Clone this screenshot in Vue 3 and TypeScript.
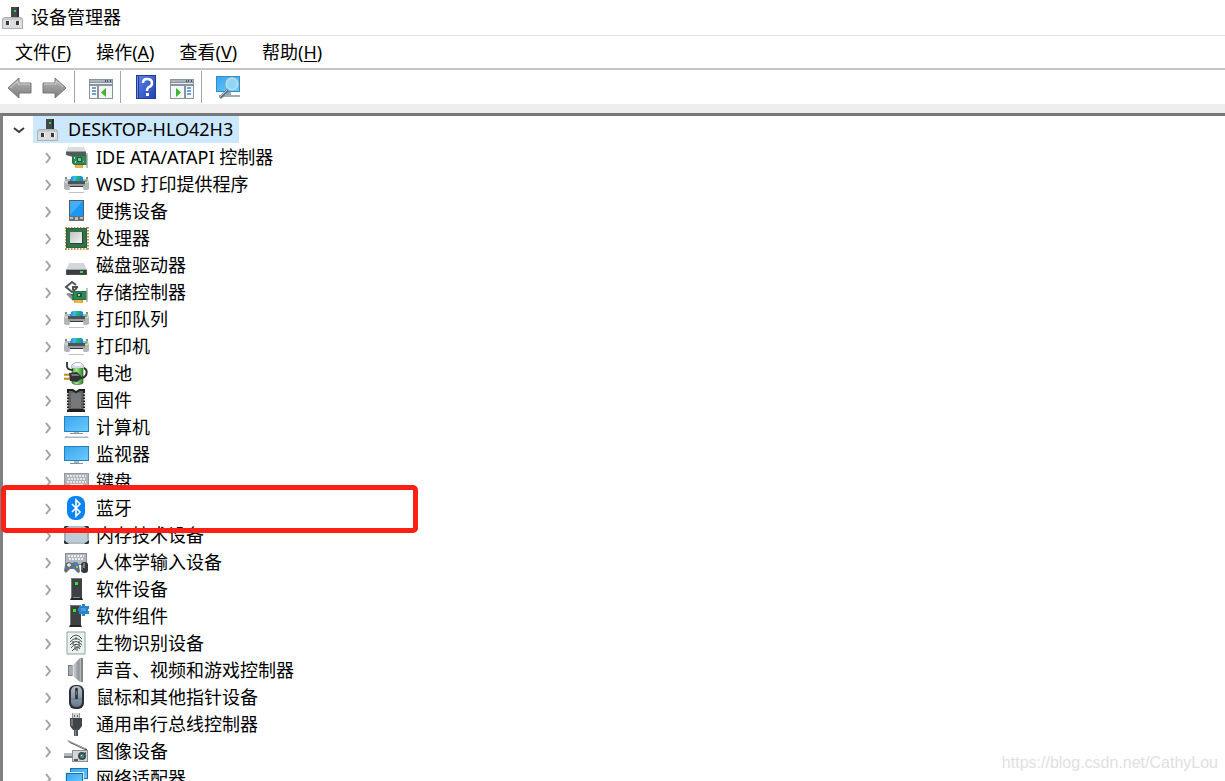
<script setup lang="ts">
import { ref } from 'vue'

interface DeviceClass {
  name: string
  icon: string
  marked?: boolean
}

const title = '设备管理器'

const menus = [
  { label: '文件', key: 'F' },
  { label: '操作', key: 'A' },
  { label: '查看', key: 'V' },
  { label: '帮助', key: 'H' },
]

const toolGroups = [
  [{ icon: 'back', label: '后退' }, { icon: 'forward', label: '前进' }],
  [{ icon: 'tree-pane', label: '显示/隐藏控制台树' }],
  [{ icon: 'help', label: '帮助' }, { icon: 'action-pane', label: '显示/隐藏操作窗格' }],
  [{ icon: 'scan', label: '扫描检测硬件改动' }],
]

const host = 'DESKTOP-HLO42H3'
const open = ref(true)

const devices: DeviceClass[] = [
  { name: 'IDE ATA/ATAPI 控制器', icon: 'ide' },
  { name: 'WSD 打印提供程序', icon: 'printer' },
  { name: '便携设备', icon: 'portable' },
  { name: '处理器', icon: 'cpu' },
  { name: '磁盘驱动器', icon: 'disk' },
  { name: '存储控制器', icon: 'storage' },
  { name: '打印队列', icon: 'printer' },
  { name: '打印机', icon: 'printer' },
  { name: '电池', icon: 'battery' },
  { name: '固件', icon: 'firmware' },
  { name: '计算机', icon: 'computer' },
  { name: '监视器', icon: 'monitor' },
  { name: '键盘', icon: 'keyboard' },
  { name: '蓝牙', icon: 'bluetooth', marked: true },
  { name: '内存技术设备', icon: 'memory' },
  { name: '人体学输入设备', icon: 'hid' },
  { name: '软件设备', icon: 'software' },
  { name: '软件组件', icon: 'component' },
  { name: '生物识别设备', icon: 'biometric' },
  { name: '声音、视频和游戏控制器', icon: 'sound' },
  { name: '鼠标和其他指针设备', icon: 'mouse' },
  { name: '通用串行总线控制器', icon: 'usb' },
  { name: '图像设备', icon: 'camera' },
  { name: '网络适配器', icon: 'network' },
]
</script>

<template>
  <div class="window">
    <svg class="defs" aria-hidden="true">
      <defs>
        <linearGradient id="g-screen" x1="0" y1="0" x2="1" y2="1">
          <stop offset="0" stop-color="#3aa5f0" /><stop offset="1" stop-color="#6ccafc" />
        </linearGradient>
        <linearGradient id="g-arrow" x1="0" y1="0" x2="0" y2="1">
          <stop offset="0" stop-color="#b8b8b8" /><stop offset="1" stop-color="#7c7c7c" />
        </linearGradient>
        <linearGradient id="g-help" x1="0" y1="0" x2="1" y2="1">
          <stop offset="0" stop-color="#5a80ea" /><stop offset="1" stop-color="#2343ae" />
        </linearGradient>
        <linearGradient id="g-metal" x1="0" y1="0" x2="1" y2="1">
          <stop offset="0" stop-color="#bfc2c4" /><stop offset="1" stop-color="#f2f3f3" />
        </linearGradient>
        <linearGradient id="g-horn" x1="0" y1="0" x2="1" y2="0">
          <stop offset="0" stop-color="#d5d7da" /><stop offset=".65" stop-color="#8d9297" /><stop offset="1" stop-color="#d9dcdf" />
        </linearGradient>
        <linearGradient id="g-print" x1="0" y1="0" x2="1" y2="0">
          <stop offset="0" stop-color="#1787e5" /><stop offset=".3" stop-color="#3fb9fa" /><stop offset=".55" stop-color="#19b877" /><stop offset="1" stop-color="#1b7ee8" />
        </linearGradient>
        <linearGradient id="g-green" x1="0" y1="0" x2="1" y2="0">
          <stop offset="0" stop-color="#4fa33b" /><stop offset=".4" stop-color="#a3e58d" /><stop offset="1" stop-color="#2c8727" />
        </linearGradient>
        <linearGradient id="g-mouse" x1="0" y1="0" x2="0" y2="1">
          <stop offset="0" stop-color="#b4bfca" /><stop offset="1" stop-color="#66788d" />
        </linearGradient>
      </defs>

      <symbol id="i-host" viewBox="0 0 24 24">
        <path d="M10 1h8v11h-8z" fill="#45484b" /><path d="M16 1h2v11h-2z" fill="#2d2f31" />
        <path d="M13 4h2v2h-2z" fill="#25df39" />
        <path d="M1 13l2-2h17l2 2v10H1z" fill="#aeb0b4" />
        <path d="M2 13h19v9H2z" fill="#dcdde0" />
        <path d="M3 12h17l1 2H2z" fill="#c6c8cb" />
        <path d="M5 15h3v4H5zM15 15h3v4h-3z" fill="#3a3a3c" />
        <path d="M8 15h1v4H8zM18 15h1v4h-1z" fill="#fff" />
      </symbol>

      <symbol id="i-ide" viewBox="0 0 24 24">
        <path d="M4 1h16l2 5H2z" fill="#dadde0" /><path d="M2 5h20v6H9L2 9z" fill="#57595b" />
        <path d="M2 5h20v1H2z" fill="#9c9ea0" />
        <path d="M8 9h15v10H10l-2-2z" fill="#1d7746" /><path d="M9 10h13v8H10z" fill="#328659" />
        <path d="M13 11h5v5h-5z" fill="#195c3b" /><path d="M14 12h3v3h-3z" fill="#8dbd9c" />
        <path d="M10 11h1v2h-1zM11 15h1v2h-1zM19 15h1v1h-1z" fill="#b6d9bf" />
        <path d="M11 19h8v3h-8z" fill="#ef9f21" /><path d="M13 19v3M15 19v3M17 19v3" stroke="#fbd17a" stroke-width=".7" />
        <path d="M23 7v15" stroke="#a4a9a7" stroke-width="1.4" />
      </symbol>

      <symbol id="i-printer" viewBox="0 0 24 24">
        <path d="M7 8V4l2-1h8l2 1v4z" fill="url(#g-print)" />
        <path d="M1 4h2v3H1zM22 4h2v3h-2z" fill="#84878a" />
        <path d="M1 6h23l1 4v6l-2 1H2l-2-1v-6z" fill="#b3b6b9" />
        <path d="M1 8h23v2H1z" fill="#cfd1d3" />
        <path d="M6 6h13v2H6z" fill="url(#g-print)" />
        <path d="M4 8h17v3H4z" fill="#505356" />
        <path d="M4 11h17v2H4z" fill="#9a9da0" />
        <path d="M6 13h13v2H6z" fill="#3b3d3f" />
        <path d="M6 14h13l1 6H5z" fill="#fff" />
        <path d="M5 19h15v1H5z" fill="#bfc1c3" /><path d="M21 7h2v2h-2z" fill="#34da3a" />
      </symbol>

      <symbol id="i-portable" viewBox="0 0 24 24">
        <path d="M5 0h15v21H5z" fill="#555a5f" /><path d="M6 1h13v15H6z" fill="#1997f6" />
        <path d="M6 1h13L6 15z" fill="#43adfa" /><path d="M5 16h15v5H5z" fill="#696f74" />
        <path d="M6 17h3v2H6zM11 17h3v3h-3zM16 17h3v2h-3z" fill="#b9bfc4" />
      </symbol>

      <symbol id="i-cpu" viewBox="0 0 24 24">
        <path d="M1 1h23M1 22h23M2 0v23M24 0v23" stroke="#bb954b" stroke-width="2" stroke-dasharray="1.5 1.5" />
        <path d="M2 1h21v20H2z" fill="#28623e" /><path d="M3 2h19v18H3z" fill="#36704b" />
        <path d="M6 5h13v12H6z" fill="#1c4a2e" /><path d="M6 5h12v11H6z" fill="url(#g-metal)" />
      </symbol>

      <symbol id="i-disk" viewBox="0 0 24 24">
        <path d="M5 9h15l3 7H2z" fill="#d4d6da" /><path d="M2 15h21v6H2z" fill="#505356" />
        <path d="M3 16h19v4H3z" fill="#3a3d3f" /><path d="M2 15h21v1H2z" fill="#a2a5a8" />
        <path d="M16 17h3v2h-3z" fill="#34dd48" />
      </symbol>

      <symbol id="i-storage" viewBox="0 0 24 24">
        <path d="M12 4 8 1 2 6l6 5 5-4M14 6H9v3" fill="none" stroke="#505356" stroke-width="2" />
        <path d="M3 12l6 6h3v-5H8z" fill="#5a5d60" /><path d="M2 13l3-1 6 6-2 2z" fill="#909396" />
        <path d="M9 10h14v9H8z" fill="#1d7746" /><path d="M10 11h12v7H10z" fill="#328659" />
        <path d="M13 12h5v4h-5z" fill="#17573a" /><path d="M14 13h2v2h-2z" fill="#9acbaa" />
        <path d="M10 19h9v3h-9z" fill="#eea027" /><path d="M12 19v3M14 19v3M16 19v3" stroke="#fbd17a" stroke-width=".7" />
        <path d="M23 7v14" stroke="#a4a9a7" stroke-width="1.4" />
      </symbol>

      <symbol id="i-battery" viewBox="0 0 24 24">
        <path d="M8 3c1-3 10-3 11 0v18c-2 2-9 2-11 0z" fill="url(#g-green)" stroke="#406637" stroke-width=".7" />
        <path d="M8 3c1-3 10-3 11 0v3H8z" fill="#d8d9ed" /><ellipse cx="13.5" cy="2.500" rx="4" ry="1.500" fill="#fafafd" />
        <path d="M3 0v4q0 4 6 4" fill="none" stroke="#2e3131" stroke-width="1.800" />
        <path d="M16 16c8 0 8-8 4-10" fill="none" stroke="#2e3131" stroke-width="2" />
        <path d="M0 13h6M0 17h7" stroke="#d2a937" stroke-width="2" /><path d="M0 12h6M0 16h7" stroke="#76601e" stroke-width=".5" />
        <path d="M5 11l8-1 4 4v3l-4 3-7-1z" fill="#303335" /><path d="M7 12h6l3 2H8z" fill="#777a7c" />
      </symbol>

      <symbol id="i-firmware" viewBox="0 0 24 24">
        <path d="M3 0h6l3 2 3-2h6v23H3z" fill="#1e1e1e" />
        <path d="M5 2h3l4 2 4-2h3v18H5z" fill="#5f6061" /><path d="M7 4h3l2 1 2-1h3v15H7z" fill="#777879" />
        <path d="M3 4v17M21 4v17" stroke="#e4e4e4" stroke-width="3" stroke-dasharray="1.500 1.500" />
      </symbol>

      <symbol id="i-computer" viewBox="0 0 24 24">
        <path d="M0 0h25v16H0z" fill="#2582b9" /><path d="M1 1h23v14H1z" fill="url(#g-screen)" />
        <path d="M10 16h5v2h-5z" fill="#a7b7c3" /><path d="M6 17h13v1H6z" fill="#7f929e" />
        <path d="M2 20h21l2 2H0z" fill="#a7b5c0" /><path d="M3 20h19v1H3z" fill="#d5dde2" />
      </symbol>

      <symbol id="i-monitor" viewBox="0 0 24 24">
        <path d="M0 3h25v15H0z" fill="#2582b9" /><path d="M1 4h23v13H1z" fill="url(#g-screen)" />
        <path d="M10 18h5v2h-5z" fill="#a7b7c3" /><path d="M6 20h13v1H6z" fill="#7f929e" />
      </symbol>

      <symbol id="i-keyboard" viewBox="0 0 24 24">
        <path d="M0 3h25v15H0z" fill="#9298a0" /><path d="M1 4h23v13H1z" fill="#b2b6bb" />
        <path d="M3 6h19M4 9h18M3 12h19" stroke="#f4f5f5" stroke-width="1.500" stroke-dasharray="2 1" />
        <path d="M6 15h13" stroke="#f4f5f5" stroke-width="2" />
      </symbol>

      <symbol id="i-bluetooth" viewBox="0 0 24 24">
        <rect x="3" y="-1" width="18" height="24" rx="8" fill="#0a84f4" />
        <path d="M8 7l8 8-4 4V3l4 4-8 8" fill="none" stroke="#fff" stroke-width="1.600" />
      </symbol>

      <symbol id="i-memory" viewBox="0 0 24 24">
        <rect x="0" y="2" width="25" height="18" rx="2" fill="#afbdc9" />
        <path d="M1 7v8M24 7v8" stroke="#8798a7" />
        <path d="M0 5V3l1-1h4zM20 2h4l1 1v3zM0 16v3l1 1h4zM20 20h4l1-1v-3z" fill="#303438" />
        <path d="M2 4h21v14H2z" fill="#bfccd6" />
      </symbol>

      <symbol id="i-hid" viewBox="0 0 24 24">
        <path d="M1 2h22v12H1z" fill="#868c92" /><path d="M2 3h20v10H2z" fill="#b4b8bc" />
        <path d="M4 5h16M5 8h15" stroke="#fff" stroke-width="1.500" stroke-dasharray="2 1" />
        <path d="M1 14q1-3 4-3l3 1 3-1q3 0 4 3l1 7-2 1-4-4H6l-4 4-2-2z" fill="#66717c" />
        <path d="M3 14h4M5 12v4" stroke="#eee" stroke-width="1.300" />
        <path d="M11 12h3v3h-3zM9 16h2v2H9z" fill="#188eed" /><path d="M12 15h2v2h-2z" fill="#efa62d" />
        <rect x="17" y="11" width="7" height="11" rx="3" fill="#35383b" /><path d="M20 12v5" stroke="#b7bdc3" />
        <path d="M18 14v5" stroke="#81868b" />
      </symbol>

      <symbol id="i-software" viewBox="0 0 24 24">
        <path d="M7 0h11v20H7z" fill="#3e4143" /><path d="M7 0h11v1H7zM7 0h1v20H7z" fill="#77797b" />
        <path d="M11 4h3v3h-3z" fill="#25e92e" /><path d="M7 20h11l1 2H6z" fill="#242627" />
        <path d="M9 19h7v1H9z" fill="#888b8d" />
      </symbol>

      <symbol id="i-component" viewBox="0 0 24 24">
        <path d="M6 0h11v20H6z" fill="#3e4143" /><path d="M6 0h11v1H6zM6 0h1v20H6z" fill="#77797b" />
        <path d="M9 4h3v3H9z" fill="#25e92e" /><path d="M6 20h11l1 2H5z" fill="#242627" />
        <path d="M15 1h3v-2h3v2h4v3h-1v2h1v3h-4v2h-3V9h-3V6h-1V3h1z" fill="#2685cb" /><path d="M17 3h5v3h-5z" fill="#4b9cdc" />
      </symbol>

      <symbol id="i-biometric" viewBox="0 0 24 24">
        <path d="M3 0h18v22H3z" fill="#e9f2ee" stroke="#8aa59b" />
        <path d="M6 7q6-8 12 0M6 10q6-7 12 0M6 13q6-7 12 0M7 16q5-7 10-1M8 19q5-6 8-2M12 5v3M9 9v4M15 9v7M11 12v6M13 14v5" fill="none" stroke="#4d5552" stroke-width="1" />
      </symbol>

      <symbol id="i-sound" viewBox="0 0 24 24">
        <path d="M4 6h5v11H4z" fill="#777c82" /><path d="M5 7h3v9H5z" fill="#a8adb1" />
        <path d="M9 6 16-1h2v24h-2l-7-6z" fill="url(#g-horn)" /><path d="M17-1h2v24h-2z" fill="#81868b" />
        <path d="M9 6v11" stroke="#e5e7e8" />
      </symbol>

      <symbol id="i-mouse" viewBox="0 0 24 24">
        <rect x="5" y="-1" width="15" height="24" rx="6" fill="#2c3035" />
        <rect x="7" y="0" width="11" height="21" rx="5" fill="url(#g-mouse)" />
        <path d="M7 13h11" stroke="#52606e" stroke-width=".5" />
        <path d="M12.500 3v9" stroke="#24282c" stroke-width="2.500" stroke-linecap="round" />
        <path d="M12.500 5v4" stroke="#66717a" />
      </symbol>

      <symbol id="i-usb" viewBox="0 0 24 24">
        <path d="M8 0h8v6H8z" fill="#92979b" /><path d="M9 0h6v5H9z" fill="#d6d9db" />
        <path d="M10 2h1v2h-1zM13 2h1v2h-1z" fill="#575a5d" />
        <path d="M6 5h12v8l-3 4H9l-3-4z" fill="#424548" /><path d="M7 6h2v7H7z" fill="#75797d" />
        <path d="M10 16h4v7h-4z" fill="#505356" /><path d="M11 17h1v6h-1z" fill="#888b8e" />
      </symbol>

      <symbol id="i-camera" viewBox="0 0 24 24">
        <path d="M3 0l20 9v2L6 3z" fill="#51565a" /><path d="M5 1l16 8" stroke="#a6aaad" />
        <path d="M0 13h11v4H0z" fill="#b7bbbe" /><path d="M0 16h10v2H0z" fill="#777c80" />
        <path d="M8 10h16v12H8z" fill="#898e92" /><path d="M9 11h14v10H9z" fill="#d4d7d9" />
        <path d="M10 19h4v2h-4zM21 12h1v2h-1z" fill="#54595c" />
        <circle cx="18" cy="16" r="4" fill="#414b4d" /><circle cx="18" cy="16" r="2" fill="#35969b" /><path d="M17 15h1v1h-1z" fill="#e9ffff" />
      </symbol>

      <symbol id="i-network" viewBox="0 0 24 24">
        <path d="M6 1h18v11H6z" fill="#1974ac" /><path d="M7 2h16v9H7z" fill="url(#g-screen)" />
        <path d="M1 5h19v13H1z" fill="#d9edf8" /><path d="M2 6h17v11H2z" fill="#1974ac" />
        <path d="M3 7h15v9H3z" fill="url(#g-screen)" /><path d="M9 17h4v4H9z" fill="#8497a3" />
      </symbol>

      <symbol id="i-back" viewBox="0 0 24 24">
        <path d="M1 13 12 3v5h12v10H12v5z" fill="url(#g-arrow)" stroke="#777" stroke-linejoin="round" />
        <path d="M3 13l8-7v3h12" fill="none" stroke="#d2d2d2" />
      </symbol>
      <symbol id="i-forward" viewBox="0 0 24 24">
        <path d="M24 13 13 3v5H1v10h12v5z" fill="url(#g-arrow)" stroke="#777" stroke-linejoin="round" />
        <path d="M2 9h12V6l7 6" fill="none" stroke="#d2d2d2" />
      </symbol>
      <symbol id="i-tree-pane" viewBox="0 0 24 24">
        <path d="M1 4h24v20H1z" fill="#8a949f" /><path d="M2 8h22v1H2z" fill="#e9edf0" />
        <path d="M2 5h22v2H2z" fill="#a8b2bc" /><path d="M17 5h1v2h-1zM19 5h1v2h-1zM22 5h1v2h-1z" fill="#3d5064" />
        <path d="M2 11h7v12H2zM11 11h13v12H11z" fill="#f5f6f7" />
        <path d="M4 13h4M4 16h4M4 19h4" stroke="#4b86bf" stroke-width="1.500" />
        <path d="M18 13v9l-5-4.500z" fill="#3eb62c" />
      </symbol>
      <symbol id="i-action-pane" viewBox="0 0 24 24">
        <path d="M1 4h24v20H1z" fill="#8a949f" /><path d="M2 8h22v1H2z" fill="#e9edf0" />
        <path d="M2 5h22v2H2z" fill="#a8b2bc" /><path d="M17 5h1v2h-1zM19 5h1v2h-1zM22 5h1v2h-1z" fill="#3d5064" />
        <path d="M2 11h13v12H2zM17 11h7v12h-7z" fill="#f5f6f7" />
        <path d="M18 13h4M18 16h4M18 19h4" stroke="#4b86bf" stroke-width="1.500" />
        <path d="M7 13v9l5-4.500z" fill="#3eb62c" />
      </symbol>
      <symbol id="i-help" viewBox="0 0 24 24">
        <path d="M2 0h20v24H2z" fill="#203b98" /><path d="M5 1h16v22H5z" fill="url(#g-help)" />
        <path d="M3 1h1v22H3z" fill="#7892dc" />
        <path d="M9 8q0-4 4-4 5 0 5 4 0 3-3 4-2 1-2 4" fill="none" stroke="#fff" stroke-width="2.500" />
        <path d="M12 18h3v3h-3z" fill="#fff" />
      </symbol>
      <symbol id="i-scan" viewBox="0 0 24 24">
        <path d="M1 1h24v16H1z" fill="#2a91c7" /><path d="M2 2h22v14H2z" fill="url(#g-screen)" />
        <path d="M11 17h5v3h-5z" fill="#98a7b1" /><path d="M4 20h21v2H4z" fill="#9aacb5" />
        <path d="M13 15l-8 8" stroke="#5c7689" stroke-width="3" /><path d="M12 15l-7 7" stroke="#adc5d1" />
        <circle cx="17" cy="9" r="6" fill="#8fd5f6" stroke="#b5def1" stroke-width="2" />
        <circle cx="17" cy="9" r="7" fill="none" stroke="#6a9eb9" stroke-width=".6" />
      </symbol>
    </svg>

    <header class="title-bar">
      <svg class="title-icon"><use href="#i-host" /></svg>
      <h1>{{ title }}</h1>
    </header>

    <nav class="menu-bar">
      <button v-for="m in menus" :key="m.key" type="button">{{ m.label }}(<u>{{ m.key }}</u>)</button>
    </nav>

    <div class="toolbar" role="toolbar">
      <div v-for="(group, i) in toolGroups" :key="i" class="tool-group">
        <button v-for="t in group" :key="t.icon" type="button" :aria-label="t.label">
          <svg class="icon"><use :href="'#i-' + t.icon" /></svg>
        </button>
      </div>
    </div>

    <main class="tree-pane">
      <div class="row root">
        <button type="button" class="expander" :aria-label="host" :aria-expanded="open" @click="open = !open">
          <svg class="chevron" viewBox="0 0 12 12"><path d="M1 4l5 4 5-4" fill="none" stroke="#3c3c3c" stroke-width="2" /></svg>
        </button>
        <div class="node selected">
          <svg class="icon"><use href="#i-host" /></svg>
          <span>{{ host }}</span>
        </div>
      </div>
      <ul v-if="open">
        <li v-for="d in devices" :key="d.name" class="row" :class="{ marked: d.marked }">
          <button type="button" class="expander" :aria-label="d.name" aria-expanded="false">
            <svg class="chevron" viewBox="0 0 12 12"><path d="M5 1l4 5-4 5" fill="none" stroke="#a3a3a3" stroke-width="2" /></svg>
          </button>
          <div class="node">
            <svg class="icon"><use :href="'#i-' + d.icon" /></svg>
            <span>{{ d.name }}</span>
          </div>
        </li>
      </ul>
    </main>

    <div class="watermark">https://blog.csdn.net/CathyLou</div>
  </div>
</template>

<style>
body {
  margin: 0;
  background: #fff;
}
</style>

<style scoped>
.window {
  position: relative;
  display: flex;
  flex-direction: column;
  height: 100vh;
  overflow: hidden;
  box-sizing: border-box;
  background: #fff;
  color: #000;
  font: 18px/27px "Noto Sans", "Noto Sans CJK SC", sans-serif;
}

.defs {
  position: absolute;
  width: 0;
  height: 0;
}

symbol {
  overflow: visible;
}

button {
  padding: 0;
  border: 0;
  background: none;
  color: inherit;
  font: inherit;
}

.title-bar {
  display: flex;
  flex: none;
  align-items: center;
  gap: 6px;
  height: 35px;
  padding-left: 1px;
  border-bottom: 1px solid #e4e4e4;
}

.title-icon {
  width: 24px;
  height: 24px;
}

h1 {
  margin: 0;
  font-size: 18px;
  font-weight: 400;
}

.menu-bar {
  display: flex;
  flex: none;
  align-items: center;
  gap: 25px;
  height: 32px;
  padding-left: 15px;
  border-bottom: 2px solid #c3c5c7;
}

.menu-bar u {
  text-decoration-thickness: 1px;
  text-underline-offset: 2px;
}

.toolbar {
  display: flex;
  flex: none;
  align-items: center;
  height: 33px;
  padding: 0 0 1px 7px;
  border-bottom: 9px solid #eee;
}

.tool-group {
  display: flex;
  align-items: center;
  gap: 11px;
  height: 32px;
}

.tool-group + .tool-group {
  margin-left: 8px;
  padding-left: 13px;
  border-left: 1px solid #a5a5a5;
}

.tool-group button {
  height: 24px;
}

.icon {
  display: block;
  flex: none;
  width: 24px;
  height: 24px;
  overflow: visible;
}

.tree-pane {
  flex: 1;
  min-height: 0;
  border-top: 3px solid #777;
  border-left: 3px solid #808080;
}

ul {
  margin: 0;
  padding: 1px 0 0 28px;
  list-style: none;
}

.row {
  display: flex;
  align-items: center;
  height: 27px;
  padding-left: 10px;
}

.expander {
  flex: none;
  width: 12px;
  height: 12px;
}

.chevron {
  display: block;
  width: 12px;
  height: 12px;
}

.node {
  display: flex;
  align-items: center;
  gap: 8px;
  margin-left: 8px;
  padding: 0 6px 0 3px;
  white-space: nowrap;
}

.selected {
  background: #cce8ff;
}

.marked {
  position: relative;
}

.marked::after {
  content: "";
  position: absolute;
  top: -10px;
  left: -30px;
  box-sizing: border-box;
  width: 417px;
  height: 48px;
  border: 5px solid #ff2015;
  border-radius: 5px;
  pointer-events: none;
}

.watermark {
  position: absolute;
  right: 7px;
  bottom: 6px;
  color: #e0e0e0;
  font: 16px/24px "Liberation Sans", Arial, sans-serif;
}
</style>
